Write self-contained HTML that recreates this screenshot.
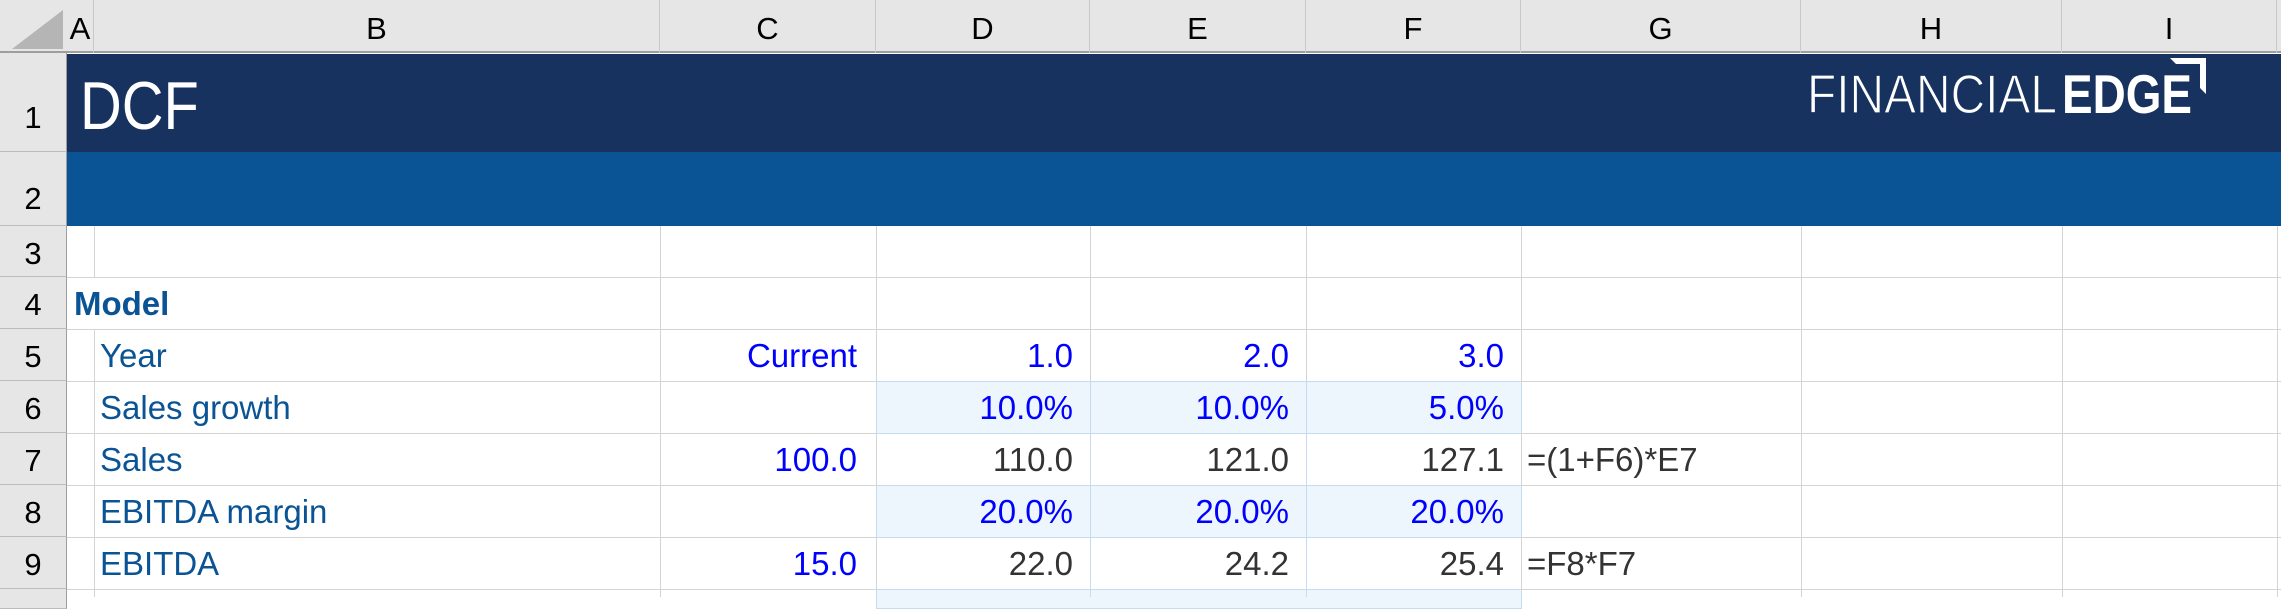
<!DOCTYPE html>
<html><head><meta charset="utf-8"><style>
*{margin:0;padding:0;box-sizing:border-box}
body{width:2281px;height:597px;overflow:hidden;background:#fff;font-family:"Liberation Sans",sans-serif;position:relative}
.a{position:absolute}
.ch{position:absolute;top:0;height:53px;font-size:31px;color:#000;text-align:center;line-height:58px;border-right:1px solid #c8c8c8}
.rh{position:absolute;left:0;width:67px;font-size:31px;text-align:center;background:#e6e6e6;border-bottom:1px solid #bcbcbc;border-right:1px solid #9e9e9e}
.vl{position:absolute;width:1px;background:#d4d4d4}
.hl{position:absolute;height:1px;background:#d4d4d4;left:67px;width:2214px}
.t{position:absolute;font-size:33px;line-height:52px;white-space:nowrap}
.r{text-align:right}
.lbl{color:#0a5394}
.in{color:#0000ff}
.cal{color:#333}
.fill{position:absolute;background:#eef6fd;border:1px solid #c5dcf0}
</style></head><body>
<div class="a" style="left:0;top:0;width:2281px;height:53px;background:#e6e6e6;border-bottom:2px solid #9e9e9e"></div>
<svg class="a" style="left:0;top:0" width="67" height="53"><polygon points="12,49 63,49 63,10" fill="#b5b5b5"/></svg>
<div class="ch" style="left:67px;width:27px">A</div>
<div class="ch" style="left:94px;width:566px">B</div>
<div class="ch" style="left:660px;width:216px">C</div>
<div class="ch" style="left:876px;width:214px">D</div>
<div class="ch" style="left:1090px;width:216px">E</div>
<div class="ch" style="left:1306px;width:215px">F</div>
<div class="ch" style="left:1521px;width:280px">G</div>
<div class="ch" style="left:1801px;width:261px">H</div>
<div class="ch" style="left:2062px;width:215px">I</div>
<div class="rh" style="top:53px;height:99px;line-height:130px">1</div>
<div class="rh" style="top:152px;height:74px;line-height:94px">2</div>
<div class="rh" style="top:226px;height:51px;line-height:56px">3</div>
<div class="rh" style="top:277px;height:52px;line-height:56px">4</div>
<div class="rh" style="top:329px;height:52px;line-height:56px">5</div>
<div class="rh" style="top:381px;height:52px;line-height:56px">6</div>
<div class="rh" style="top:433px;height:52px;line-height:56px">7</div>
<div class="rh" style="top:485px;height:52px;line-height:56px">8</div>
<div class="rh" style="top:537px;height:52px;line-height:56px">9</div>
<div class="rh" style="top:589px;height:20px"></div>
<div class="vl" style="left:94px;top:226px;height:51px"></div>
<div class="vl" style="left:94px;top:329px;height:268px"></div>
<div class="vl" style="left:660px;top:226px;height:371px"></div>
<div class="vl" style="left:876px;top:226px;height:371px"></div>
<div class="vl" style="left:1090px;top:226px;height:371px"></div>
<div class="vl" style="left:1306px;top:226px;height:371px"></div>
<div class="vl" style="left:1521px;top:226px;height:371px"></div>
<div class="vl" style="left:1801px;top:226px;height:371px"></div>
<div class="vl" style="left:2062px;top:226px;height:371px"></div>
<div class="vl" style="left:2277px;top:226px;height:371px"></div>
<div class="hl" style="top:277px"></div>
<div class="hl" style="top:329px"></div>
<div class="hl" style="top:381px"></div>
<div class="hl" style="top:433px"></div>
<div class="hl" style="top:485px"></div>
<div class="hl" style="top:537px"></div>
<div class="hl" style="top:589px"></div>
<div class="fill" style="left:876px;top:381px;width:646px;height:53px"></div>
<div class="fill" style="left:876px;top:485px;width:646px;height:53px"></div>
<div class="fill" style="left:876px;top:589px;width:646px;height:20px"></div>
<div class="vl" style="left:1090px;top:381px;height:216px;background:#c5dcf0"></div>
<div class="vl" style="left:1306px;top:381px;height:216px;background:#c5dcf0"></div>
<div class="a" style="left:67px;top:54px;width:2214px;height:98px;background:#17325f"></div>
<div class="a" style="left:67px;top:152px;width:2214px;height:74px;background:#0a5394"></div>
<div class="t" style="left:80px;top:66px;font-size:68px;line-height:80px;color:#fff;transform:scaleX(0.85);transform-origin:0 0">DCF</div>
<svg class="a" style="left:1800px;top:54px" width="420" height="70">
<text x="7" y="59" font-family="Liberation Sans" font-size="55" fill="#fff" textLength="250" lengthAdjust="spacingAndGlyphs" stroke="#17325f" stroke-width="1.2">FINANCIAL</text>
<text x="262" y="59" font-family="Liberation Sans" font-size="55" font-weight="bold" fill="#fff" textLength="130" lengthAdjust="spacingAndGlyphs">EDGE</text>
<polygon points="370,4 406,4 406,40 400,34 400,10 376,10" fill="#fff"/>
</svg>
<div class="t lbl" style="left:74px;top:278px;font-weight:bold">Model</div>
<div class="t lbl" style="left:100px;top:330px">Year</div>
<div class="t lbl" style="left:100px;top:382px">Sales growth</div>
<div class="t lbl" style="left:100px;top:434px">Sales</div>
<div class="t lbl" style="left:100px;top:486px">EBITDA margin</div>
<div class="t lbl" style="left:100px;top:538px">EBITDA</div>
<div class="t r in" style="right:1424px;top:330px">Current</div>
<div class="t r in" style="right:1424px;top:434px">100.0</div>
<div class="t r in" style="right:1424px;top:538px">15.0</div>
<div class="t r in" style="right:1208px;top:330px">1.0</div>
<div class="t r in" style="right:992px;top:330px">2.0</div>
<div class="t r in" style="right:777px;top:330px">3.0</div>
<div class="t r in" style="right:1208px;top:382px">10.0%</div>
<div class="t r in" style="right:992px;top:382px">10.0%</div>
<div class="t r in" style="right:777px;top:382px">5.0%</div>
<div class="t r cal" style="right:1208px;top:434px">110.0</div>
<div class="t r cal" style="right:992px;top:434px">121.0</div>
<div class="t r cal" style="right:777px;top:434px">127.1</div>
<div class="t r in" style="right:1208px;top:486px">20.0%</div>
<div class="t r in" style="right:992px;top:486px">20.0%</div>
<div class="t r in" style="right:777px;top:486px">20.0%</div>
<div class="t r cal" style="right:1208px;top:538px">22.0</div>
<div class="t r cal" style="right:992px;top:538px">24.2</div>
<div class="t r cal" style="right:777px;top:538px">25.4</div>
<div class="t cal" style="left:1527px;top:434px">=(1+F6)*E7</div>
<div class="t cal" style="left:1527px;top:538px">=F8*F7</div>
</body></html>
